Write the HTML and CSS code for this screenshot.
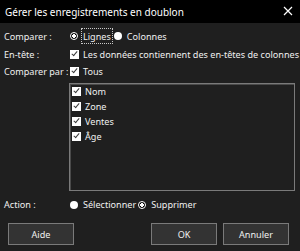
FILE: index.html
```html
<!DOCTYPE html>
<html>
<head>
	<title>Gérer les enregistrements en doublon</title>
	<link rel="stylesheet" href="styles.css">
</head>
<body>
	<div class="titlebar">
		<span class="title">Gérer les enregistrements en doublon</span>
		<svg class="close" width="10" height="10" viewBox="0 0 10 10">
			<path d="M1 1 L9 9 M9 1 L1 9" stroke="#ffffff" stroke-width="1.2"/>
		</svg>
	</div>
	<div class="dialog">
		<div class="row">
			<span class="label">Comparer :</span>
			<span class="option"><span class="radio checked"></span><span class="focus">Lignes</span></span>
			<span class="option"><span class="radio"></span>Colonnes</span>
		</div>
		<div class="row">
			<span class="label">En-tête :</span>
			<span class="option"><span class="check"></span>Les données contiennent des en-têtes de colonnes</span>
		</div>
		<div class="row short">
			<span class="label">Comparer par :</span>
			<span class="option"><span class="check"></span>Tous</span>
		</div>
		<div class="listbox">
			<div class="item"><span class="check"></span>Nom</div>
			<div class="item"><span class="check"></span>Zone</div>
			<div class="item"><span class="check"></span>Ventes</div>
			<div class="item"><span class="check"></span>Âge</div>
		</div>
		<div class="row action">
			<span class="label">Action :</span>
			<span class="option"><span class="radio"></span>Sélectionner</span>
			<span class="option"><span class="radio checked"></span>Supprimer</span>
		</div>
		<div class="buttons">
			<button class="button">Aide</button>
			<span class="spacer"></span>
			<button class="button">OK</button>
			<button class="button">Annuler</button>
		</div>
	</div>
</body>
</html>
```
FILE: styles.css
```css
body {
	margin: 0;
	padding: 0;
	width: 300px;
	height: 251px;
	background-color: #1f1f1f;
	color: #f0f0f0;
	font-family: "Noto Sans", sans-serif;
	font-size: 9.1px;
	overflow: hidden;
}

.titlebar {
	height: 23px;
	background-color: #000000;
	display: flex;
	align-items: center;
	justify-content: space-between;
	padding: 0 7px 0 5px;
	color: #ffffff;
	font-size: 10px;
}

.close {
	margin-top: -1px;
}

.dialog {
	display: flex;
	flex-direction: column;
	padding-top: 4px;
}

.row {
	height: 18px;
	display: flex;
	align-items: center;
}

.row.short {
	height: 17px;
}

.label {
	width: 70px;
	padding-left: 4px;
	box-sizing: border-box;
	flex-shrink: 0;
	white-space: nowrap;
}

.option {
	display: flex;
	align-items: center;
	white-space: nowrap;
	margin-right: 2px;
}

.radio {
	width: 8px;
	height: 8px;
	border-radius: 50%;
	background-color: #ffffff;
	margin-right: 5px;
	flex-shrink: 0;
}

.radio.checked {
	box-sizing: border-box;
	border: 1.5px solid #ffffff;
	background: radial-gradient(circle, #ffffff 0 1.6px, #000000 2px);
}

.focus {
	outline: 1px dotted #c8c8c8;
	padding: 1px 1px 0;
	margin-left: -1px;
}

.check {
	width: 9px;
	height: 9px;
	background-color: #ffffff;
	margin-right: 4px;
	flex-shrink: 0;
	position: relative;
}

.check::after {
	content: "";
	position: absolute;
	left: 3px;
	top: 0px;
	width: 2px;
	height: 5px;
	border: solid #3c3c3c;
	border-width: 0 1.5px 1.5px 0;
	transform: rotate(40deg);
}

.listbox {
	margin: 3px 5px 0 69px;
	height: 108px;
	box-sizing: border-box;
	border: 1px solid #7a7a7a;
	box-shadow: inset 1px 1px 0 #4a4a4a;
	padding: 0 0 0 2px;
}

.item {
	height: 15px;
	display: flex;
	align-items: center;
}

.row.action {
	margin-top: 5px;
	height: 17px;
}

.buttons {
	display: flex;
	margin-top: 10px;
	padding: 0 11px 0 8px;
	gap: 6px;
}

.spacer {
	flex: 1;
}

.button {
	width: 66px;
	height: 22px;
	background-color: #333333;
	border: 1px solid #7a7a7a;
	color: #f0f0f0;
	font-family: "Noto Sans", sans-serif;
	font-size: 9.1px;
	padding: 0;
}
```
